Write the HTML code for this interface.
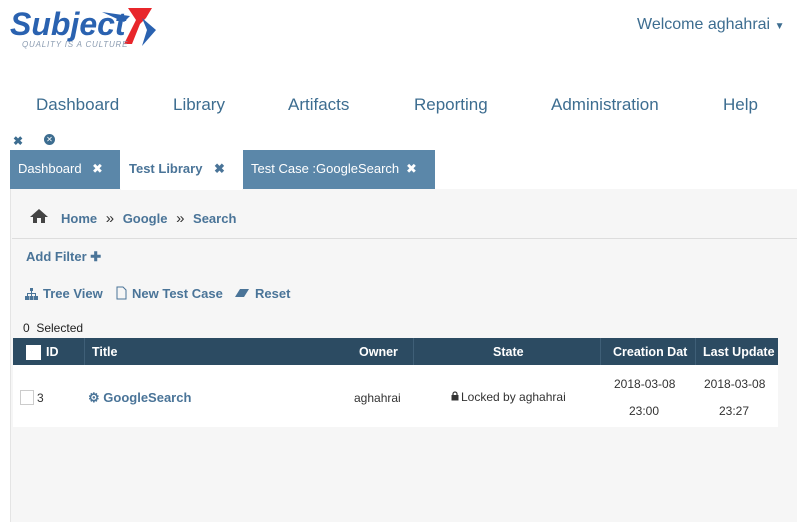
<!DOCTYPE html>
<html><head><style>
*{margin:0;padding:0;box-sizing:border-box}
body{width:800px;height:522px;overflow:hidden;background:#fff;font-family:"Liberation Sans",sans-serif;position:relative}
.a{position:absolute;white-space:nowrap}
.nav{top:95px;font-size:17px;color:#3d6d90}
.tab{top:150px;height:39px;background:#5b87a9;color:#fff;font-size:13px;line-height:38px;padding-left:8px}
.b{color:#4a7498;font-weight:bold;font-size:13px}
.th{color:#fff;font-weight:bold;font-size:12.5px;top:345px}
.td{font-size:12px;color:#333}
</style></head><body>
<div class="a" style="left:10px;top:6px;font-style:italic;font-weight:bold;font-size:32px;color:#2a62b0;letter-spacing:0px">Subject</div>
<svg class="a" style="left:100px;top:4px" width="58" height="46"><path d="M28 4 L52 4 L46 14 L40 20 L32 40 L24 40 L36 16 Z" fill="#e8262b"/><path d="M2 8 L30 12 L24 18 Z" fill="#2a62b0"/><path d="M42 14 L56 26 L42 42 L47 26Z" fill="#2a62b0"/></svg>
<div class="a" style="left:22px;top:40px;font-size:8px;font-style:italic;color:#8a9bb0;letter-spacing:0.8px">QUALITY IS A CULTURE</div>
<div class="a" style="left:637px;top:16px;font-size:16px;color:#3d6d90">Welcome aghahrai <span style="font-size:10px">▼</span></div>
<div class="a nav" style="left:36px">Dashboard</div>
<div class="a nav" style="left:173px">Library</div>
<div class="a nav" style="left:288px">Artifacts</div>
<div class="a nav" style="left:414px">Reporting</div>
<div class="a nav" style="left:551px">Administration</div>
<div class="a nav" style="left:723px">Help</div>
<div class="a" style="left:13px;top:134px;font-size:12px;color:#3d6d90;font-weight:bold">✖</div>
<div class="a" style="left:44px;top:134px;width:11px;height:11px;border-radius:50%;background:#3d6d90;color:#fff;font-size:8px;text-align:center;line-height:11px">✕</div>
<div class="a" style="left:10px;top:189px;width:787px;height:333px;background:#f6f6f6;border-left:1px solid #e4e4e4"></div>
<div class="a tab" style="left:10px;width:110px">Dashboard <span style="position:absolute;left:82px">✖</span></div>
<div class="a tab" style="left:121px;width:121px;background:#fff;color:#4a7498;height:40px;font-weight:bold">Test Library <span style="position:absolute;left:93px">✖</span></div>
<div class="a tab" style="left:243px;width:192px">Test Case :GoogleSearch <span style="position:absolute;left:163px">✖</span></div>
<svg class="a" style="left:29px;top:208px" width="20" height="16"><path d="M10 1 L19 9 L16 9 L16 15 L12 15 L12 10 L8 10 L8 15 L4 15 L4 9 L1 9 Z" fill="#444"/></svg>
<div class="a b" style="left:61px;top:210px">Home <span style="color:#333;font-weight:normal;font-size:15px;margin:0 5px">»</span> Google <span style="color:#333;font-weight:normal;font-size:15px;margin:0 5px">»</span> Search</div>
<div class="a" style="left:12px;top:238px;width:785px;height:1px;background:#ddd"></div>
<div class="a b" style="left:26px;top:249px">Add Filter ✚</div>
<svg class="a" style="left:25px;top:288px" width="13" height="12"><path d="M5 0h3v3H5zM6 3h1v2H6zM2 5h9v1H2zM2 6h1v2H2zM10 6h1v2h-1zM6 6h1v2H6zM0 8h4v4H0zM4.5 8h4v4h-4zM9 8h4v4H9z" fill="#4a7498"/></svg>
<div class="a b" style="left:43px;top:286px">Tree View</div>
<svg class="a" style="left:116px;top:286px" width="11" height="14"><path d="M1 1h6l3 3v9H1z" fill="none" stroke="#4a7498"/></svg>
<div class="a b" style="left:132px;top:286px">New Test Case</div>
<svg class="a" style="left:235px;top:288px" width="15" height="10"><path d="M5 1h9l-5 8H0z" fill="#4a7498"/></svg>
<div class="a b" style="left:255px;top:286px">Reset</div>
<div class="a" style="left:23px;top:321px;font-size:12px;color:#222">0 &nbsp;Selected</div>
<div class="a" style="left:13px;top:338px;width:765px;height:27px;background:#2c4b62"></div>
<div class="a" style="left:26px;top:345px;width:15px;height:15px;background:#fff"></div>
<div class="a th" style="left:46px">ID</div>
<div class="a th" style="left:92px">Title</div>
<div class="a th" style="left:359px">Owner</div>
<div class="a th" style="left:493px">State</div>
<div class="a th" style="left:613px">Creation Dat</div>
<div class="a th" style="left:703px">Last Update</div>
<div class="a" style="left:84px;top:338px;width:1px;height:27px;background:#3f5f77"></div>
<div class="a" style="left:413px;top:338px;width:1px;height:27px;background:#3f5f77"></div>
<div class="a" style="left:600px;top:338px;width:1px;height:27px;background:#3f5f77"></div>
<div class="a" style="left:695px;top:338px;width:1px;height:27px;background:#3f5f77"></div>
<div class="a" style="left:13px;top:365px;width:765px;height:62px;background:#fff"></div>
<div class="a" style="left:20px;top:390px;width:14px;height:15px;border:1px solid #ccc;background:#fff"></div>
<div class="a td" style="left:37px;top:391px">3</div>
<div class="a b" style="left:88px;top:390px">⚙ GoogleSearch</div>
<div class="a td" style="left:354px;top:391px">aghahrai</div>
<svg class="a" style="left:451px;top:391px" width="8" height="10"><path d="M2 4V3a2 2 0 0 1 4 0v1" fill="none" stroke="#333" stroke-width="1.2"/><rect x="0.5" y="4" width="7" height="5.5" fill="#333"/></svg>
<div class="a td" style="left:461px;top:390px">Locked by aghahrai</div>
<div class="a td" style="left:614px;top:377px">2018-03-08</div>
<div class="a td" style="left:629px;top:404px">23:00</div>
<div class="a td" style="left:704px;top:377px">2018-03-08</div>
<div class="a td" style="left:719px;top:404px">23:27</div>
</body></html>
